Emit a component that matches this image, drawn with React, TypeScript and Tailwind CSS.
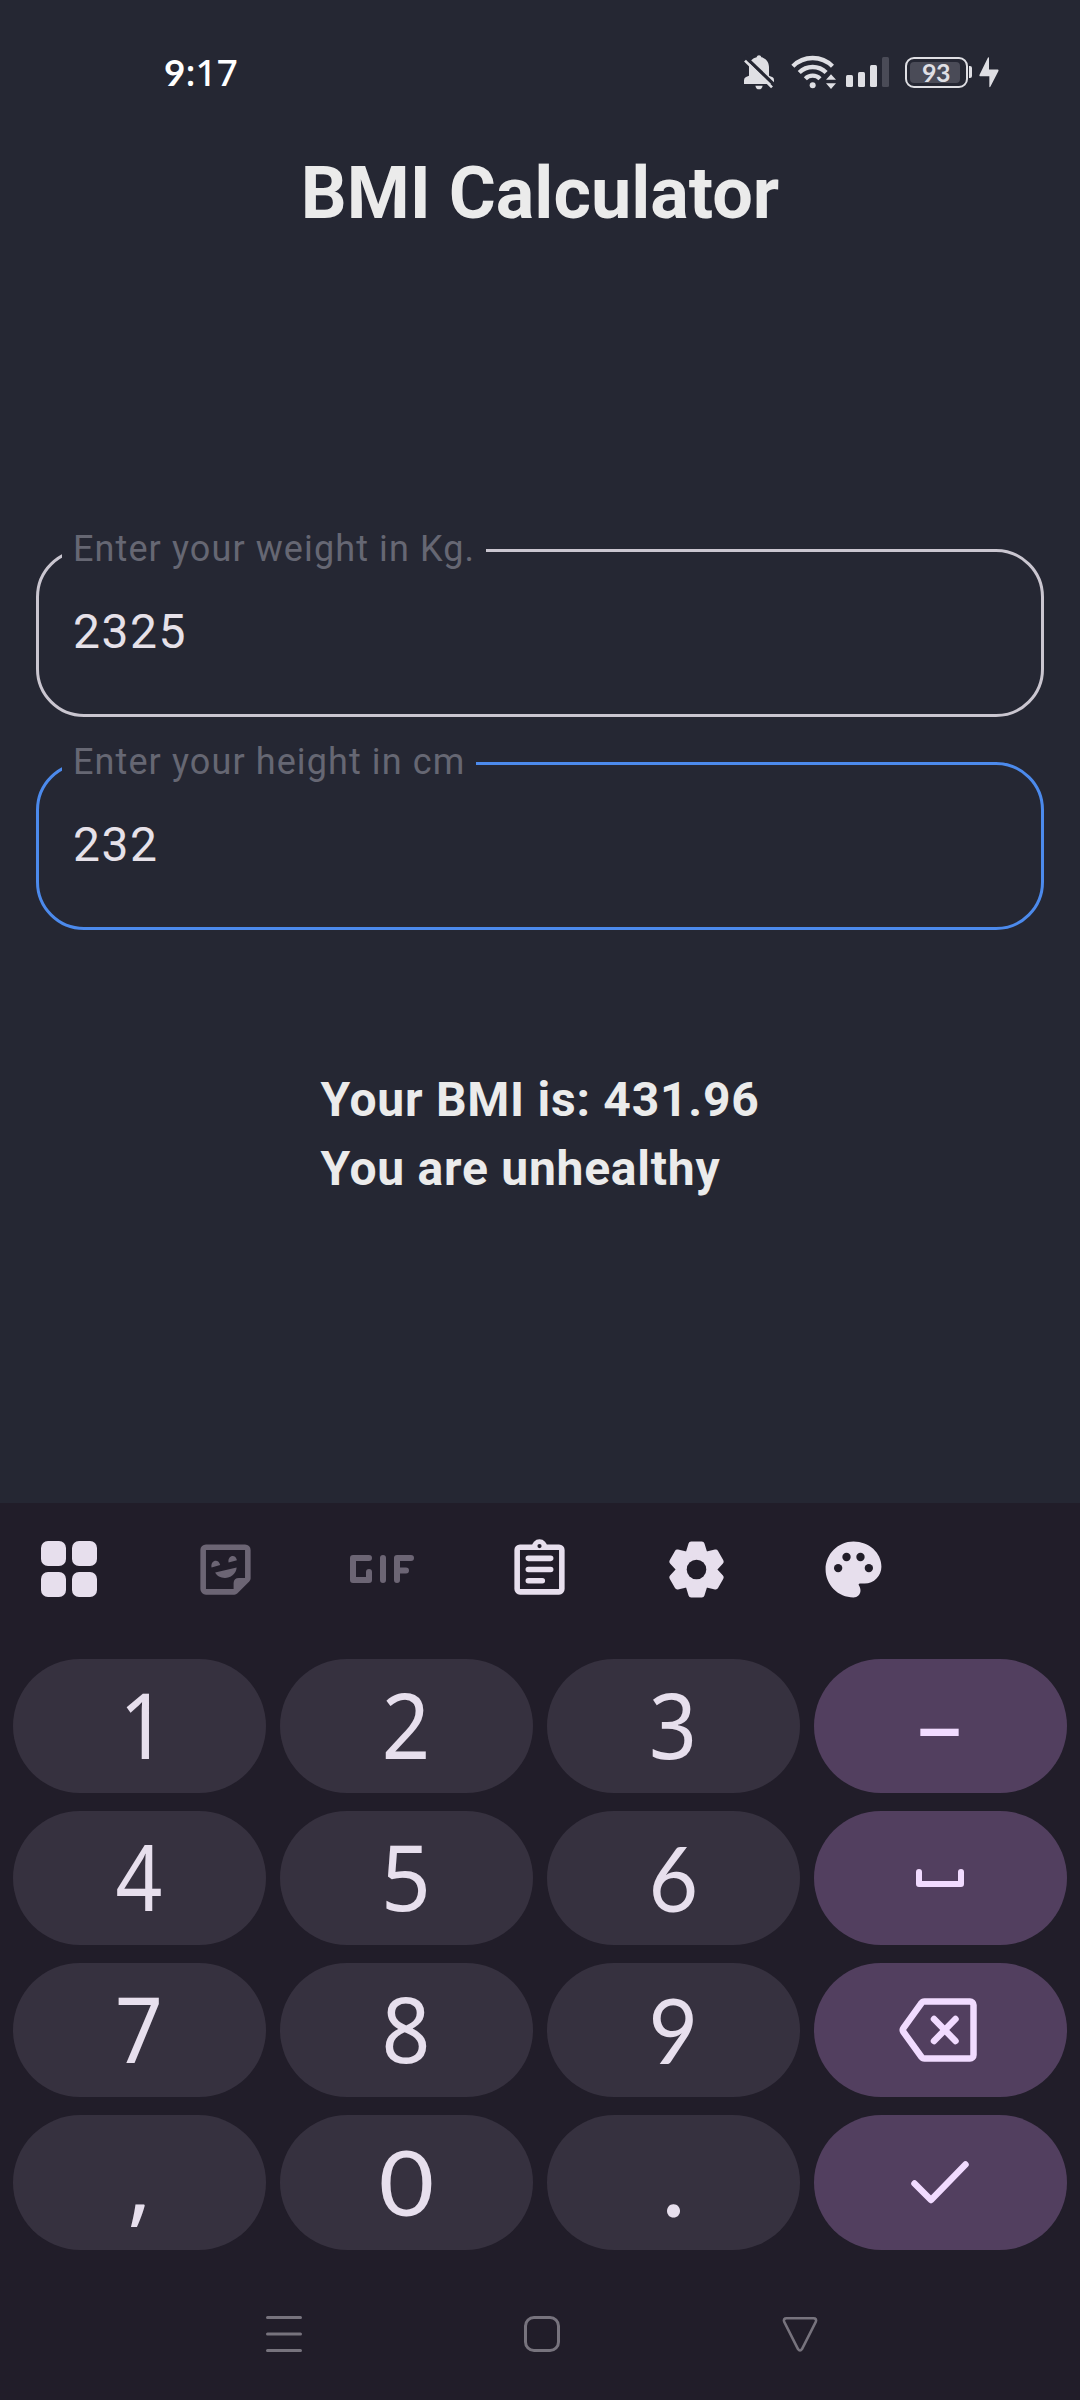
import React from "react";

function BellOffIcon() {
  return (
    <svg className="h-[35px] w-[30px]" viewBox="0 0 90 105" fill="#dfdfe4">
      <path d="M15 36C15 20 26 9 38 7C39 -1 51 -1 52 7C64 9 75 20 75 36V62L86 67Q90 69 90 76V87H0V76Q0 69 6 66L15 62Z" />
      <path d="M34 92H56Q54 103 45 103Q36 103 34 92Z" />
      <path d="M2 4L100 98" stroke="#252733" strokeWidth="10" />
      <path d="M3 17L84 97" stroke="#dfdfe4" strokeWidth="8" />
    </svg>
  );
}

function WifiIcon() {
  return (
    <svg className="h-[35px] w-[46px]" viewBox="0 0 138 105" fill="none" stroke="#dfdfe4" strokeWidth="13">
      <path d="M5.600 33.600A84 84 0 0 1 124.400 33.600" />
      <path d="M24.700 52.700A57 57 0 0 1 105.300 52.700" />
      <path d="M43 71A31 31 0 0 1 87 71" />
      <circle cx="65" cy="91" r="9" fill="#dfdfe4" stroke="none" />
      <path d="M105 74L120 58L135 74ZM105 85L120 102L135 85Z" fill="#dfdfe4" stroke="none" />
    </svg>
  );
}

function Signal() {
  return (
    <div className="flex h-[30px] items-end gap-[5px]">
      <span className="h-[12px] w-[7px] rounded-[1.5px] bg-[#dfdfe4]" />
      <span className="h-[15px] w-[7px] rounded-[1.5px] bg-[#dfdfe4]" />
      <span className="h-[22px] w-[7px] rounded-[1.5px] bg-[#dfdfe4]" />
      <span className="h-[30px] w-[7px] rounded-[1.5px] bg-[#4a4b57]" />
    </div>
  );
}

function Battery() {
  return (
    <div className="flex items-center gap-px">
      <div className="h-[31px] w-[63px] rounded-[9px] border-2 border-[#dfdfe4] p-[3px]">
        <div className="flex h-full w-[50px] items-center justify-center rounded-[4px] bg-[#4a4b57] pl-[2px] font-['Lato'] text-[25px] font-bold leading-none tracking-[-0.5px] text-[#dfdfe4]">
          93
        </div>
      </div>
      <div className="h-[12px] w-[3px] rounded-r-[2px] bg-[#dfdfe4]" />
    </div>
  );
}

function StatusBar() {
  return (
    <div className="flex h-[144px] items-center justify-between pl-[164px] pr-[81px]">
      <span className="font-['Noto_Sans'] text-[37px] font-medium leading-[50px] text-white">
        <span className="font-['Lato'] font-bold">9</span>:17
      </span>
      <div className="flex items-center">
        <BellOffIcon />
        <div className="ml-[17px]">
          <WifiIcon />
        </div>
        <div className="ml-[9px]">
          <Signal />
        </div>
        <div className="ml-[16px]">
          <Battery />
        </div>
        <svg className="ml-[7px] h-[31px] w-[20px]" viewBox="0 0 60 92" fill="#dfdfe4">
          <path d="M27 1Q30-1 30 3V37H56Q60 38 58 42L34 89Q31 92 31 88V57H3Q0 56 2 52Z" />
        </svg>
      </div>
    </div>
  );
}

function Field({ label, value, focused = false }: { label: string; value: string; focused?: boolean }) {
  return (
    <div
      className={
        focused
          ? "relative h-[168px] rounded-[48px] border-[3px] border-[#4c8aec] pl-[34px] pt-[52px]"
          : "relative h-[168px] rounded-[48px] border-[3px] border-[#cac6d0] pl-[34px] pt-[52px]"
      }
    >
      <label className="absolute -top-[24px] left-[23px] bg-[#252733] pl-[11px] pr-[11px] text-[36px] leading-[42px] tracking-[1.1px] text-[#666773]">
        {label}
      </label>
      <div className="text-[48px] leading-[56px] tracking-[1.5px] text-[#e6e1e9]">{value}</div>
    </div>
  );
}

function GridIcon() {
  return (
    <div className="grid grid-cols-2 gap-[6px]">
      <span className="size-[25px] rounded-[7px] bg-[#e7dfed]" />
      <span className="size-[25px] rounded-[7px] bg-[#e7dfed]" />
      <span className="size-[25px] rounded-[7px] bg-[#e7dfed]" />
      <span className="size-[25px] rounded-[7px] bg-[#e7dfed]" />
    </div>
  );
}

function StickerIcon() {
  return (
    <svg className="size-[67px]" viewBox="0 0 24 24" fill="#6c6574">
      <path
        fillRule="evenodd"
        d="M5 3H19A2 2 0 0 1 21 5V15.200Q21 15.800 20.500 16.300L16.300 20.500Q15.800 21 15.200 21H5A2 2 0 0 1 3 19V5A2 2 0 0 1 5 3ZM5 5V19H14.900V16.800Q15 15 16.800 15H19V5Z"
      />
      <path d="M7 11.300C6.500 8.600 9.600 7.900 10.100 10.400ZM13.100 9.500C12.600 6.900 15.700 6.200 16.100 8.700ZM8.300 13.100L16 11.300C15.800 13.800 13.700 15 11.800 15C10.200 15 8.900 14.300 8.300 13.100Z" />
    </svg>
  );
}

function GifIcon() {
  return (
    <svg
      className="mr-[2px] h-[28px] w-[64px]"
      viewBox="0 0 64 28"
      fill="none"
      stroke="#6c6574"
      strokeWidth="6"
      strokeLinecap="round"
      strokeLinejoin="round"
    >
      <path d="M19 3H3V25H19V17M33 3V25M61 3H47V25M47 15.500H56" />
    </svg>
  );
}

function ClipboardIcon() {
  return (
    <svg className="size-[67px]" viewBox="0 0 24 24" fill="none" stroke="#e7dfed" strokeWidth="2" strokeLinecap="round">
      <rect x="4" y="4" width="16" height="16" rx="1" />
      <path d="M8 8H16M8 12H16M8 16H13" />
      <path d="M9.200 4A2.800 2.800 0 0 1 14.800 4V5H9.200Z" fill="#e7dfed" stroke="none" />
      <circle cx="12" cy="3.600" r=".75" fill="#211d29" stroke="none" />
    </svg>
  );
}

function GearIcon() {
  const teeth = [0, 60, 120, 180, 240, 300];
  return (
    <svg className="size-[67px]" viewBox="-12 -12 24 24" fill="#e7dfed">
      {teeth.map((angle) => (
        <path
          key={angle}
          transform={`rotate(${angle})`}
          d="M0 0L-3.050 -5.280L-1.900 -9H1.900L3.050 -5.280Z"
          stroke="#e7dfed"
          strokeWidth="2"
          strokeLinejoin="round"
        />
      ))}
      <circle r="3.500" fill="#211d29" />
    </svg>
  );
}

function PaletteIcon() {
  return (
    <svg className="size-[67px]" viewBox="0 0 24 24" fill="#e7dfed">
      <path d="M12 2C6.490 2 2 6.490 2 12s4.490 10 10 10c1.400 0 2.500-1.100 2.500-2.500 0-.700-.200-1.200-.500-1.700-.300-.500-.100-.800.300-.800H16c3.310 0 6-2.690 6-6 0-4.960-4.490-9-10-9z" />
      <g fill="#211d29">
        <circle cx="9.500" cy="7.500" r="1.500" />
        <circle cx="14.500" cy="7.500" r="1.500" />
        <circle cx="6.500" cy="11.500" r="1.500" />
        <circle cx="17.500" cy="11.500" r="1.500" />
      </g>
    </svg>
  );
}

function Key({ children, accent = false }: { children: React.ReactNode; accent?: boolean }) {
  return (
    <button
      className={
        accent
          ? "flex items-center justify-center rounded-full bg-[#523f5f] font-['Noto_Sans'] text-[91px] leading-none text-[#f1dbff]"
          : "flex items-center justify-center rounded-full bg-[#36313f] pb-[4px] font-['Noto_Sans'] text-[91px] leading-none text-[#e7dfed]"
      }
    >
      {children}
    </button>
  );
}

function Keyboard() {
  return (
    <div className="flex h-[897px] flex-col bg-[#211d29]">
      <div className="flex h-[132px] items-center">
        <div className="-ml-[10px] grid grid-cols-[repeat(6,157px)] place-items-center">
          <GridIcon />
          <StickerIcon />
          <GifIcon />
          <ClipboardIcon />
          <GearIcon />
          <PaletteIcon />
        </div>
      </div>
      <div className="mt-[24px] grid grid-cols-4 grid-rows-[134px_134px_134px_135px] gap-x-[14px] gap-y-[18px] px-[13px]">
        <Key><span className="inline-block origin-right scale-x-92 pl-[3px]">1</span></Key>
        <Key><span className="inline-block scale-x-93">2</span></Key>
        <Key><span className="inline-block scale-x-92">3</span></Key>
        <Key accent>
          <span className="pr-[2px] pb-[7px]">–</span>
        </Key>
        <Key><span className="inline-block scale-x-90">4</span></Key>
        <Key><span className="inline-block scale-x-96">5</span></Key>
        <Key><span className="inline-block scale-x-94 font-['Lato']">6</span></Key>
        <Key accent>
          <svg className="mr-[2px] h-[18px] w-[48px]" viewBox="0 0 48 18" fill="none" stroke="#f1dbff" strokeWidth="6" strokeLinecap="round" strokeLinejoin="round">
            <path d="M3 3V15H45V3" />
          </svg>
        </Key>
        <Key><span className="inline-block scale-x-92">7</span></Key>
        <Key><span className="inline-block scale-x-94">8</span></Key>
        <Key><span className="inline-block scale-x-94 font-['Lato']">9</span></Key>
        <Key accent>
          <svg className="mr-[5px] h-[64px] w-[78px]" viewBox="0 0 78 64" fill="none" stroke="#f1dbff" strokeWidth="6.500" strokeLinecap="round" strokeLinejoin="round">
            <path d="M25.500 3.500H71A3.500 3.500 0 0 1 74.500 7V57A3.500 3.500 0 0 1 71 60.500H25.500Q23.500 60.500 22.500 59L4.500 34Q3 32 4.500 30L22.500 5Q23.500 3.500 25.500 3.500Z" />
            <path d="M35 21L56.500 43M56.500 21L35 43" />
          </svg>
        </Key>
        <Key><span>,</span></Key>
        <Key><span className="inline-block scale-x-105 font-['Lato']">0</span></Key>
        <Key><span className="pb-[7px] font-['Lato'] text-[104px]">.</span></Key>
        <Key accent>
          <svg className="mr-[2px] h-[43px] w-[58px]" viewBox="0 0 58 43" fill="none" stroke="#f1dbff" strokeWidth="6.500" strokeLinecap="round" strokeLinejoin="round">
            <path d="M3.500 22.500L20 39L54.500 3.500" />
          </svg>
        </Key>
      </div>
      <div className="mt-[55px] grid grid-cols-[repeat(3,258px)] place-items-center pl-[155px]">
        <svg className="h-[58px] w-[36px]" viewBox="0 -11 36 58" stroke="#77737d" strokeWidth="3" strokeLinecap="round">
          <path d="M1.500 1.500H34.500M1.500 18H34.500M1.500 34.500H34.500" />
        </svg>
        <span className="size-[36px] rounded-[10px] border-[3px] border-[#77737d]" />
        <svg className="h-[36px] w-[36px]" viewBox="0 0 36 36" fill="none" stroke="#77737d" strokeWidth="2.600">
          <path d="M4.500 2.300H31.500Q35 2.300 33.800 5.800L20 33Q18 36 16 33L2.200 5.800Q1 2.300 4.500 2.300Z" />
        </svg>
      </div>
    </div>
  );
}

export default function App() {
  return (
    <div className="flex h-[2400px] w-[1080px] flex-col overflow-hidden bg-[#252733] font-['Roboto',sans-serif]">
      <StatusBar />
      <h1 className="mt-[8px] text-center text-[72px] font-bold leading-[84px] text-[#ebebeb]">BMI Calculator</h1>
      <div className="mt-[313px] flex flex-col gap-[45px] px-[36px]">
        <Field label="Enter your weight in Kg." value="2325" />
        <Field label="Enter your height in cm" value="232" focused />
      </div>
      <div className="mt-[135px] flex flex-1 justify-center">
        <div className="text-[48px] font-bold leading-[69px] tracking-[0.75px] text-[#ebebeb]">
          <p>Your BMI is: 431.96</p>
          <p>You are unhealthy</p>
        </div>
      </div>
      <Keyboard />
    </div>
  );
}
